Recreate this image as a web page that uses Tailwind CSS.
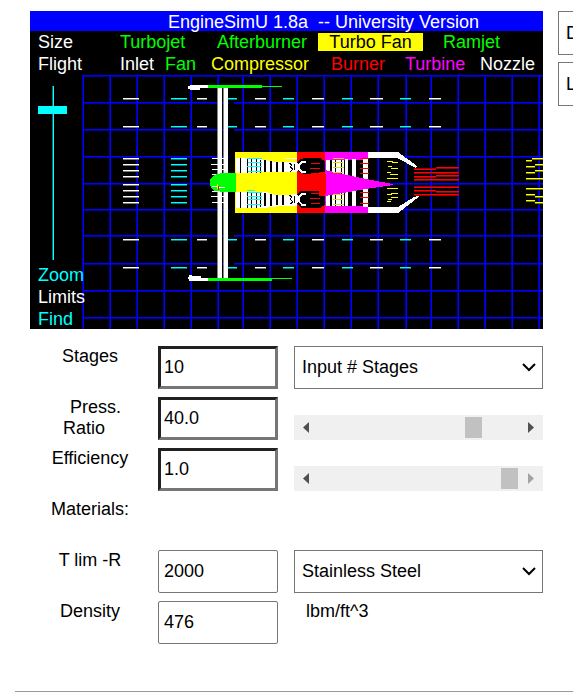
<!DOCTYPE html>
<html lang="en">
<head>
<meta charset="utf-8">
<meta name="viewport" content="width=device-width, initial-scale=1">
<title>EngineSimU 1.8a</title>
<script src="https://cdn.jsdelivr.net/npm/@tailwindcss/browser@4"></script>
</head>
<body class="bg-white text-black text-[18px] leading-[21px] font-['Liberation_Sans',Arial,sans-serif] overflow-hidden">
<div class="flex gap-[15px] pl-[30px] pt-[11px]">
  <main class="flex-1 min-w-0">
    <section class="relative overflow-hidden bg-black" aria-label="Engine schematic">
      <svg class="block w-full" viewBox="30 11 513 318" shape-rendering="crispEdges" aria-hidden="true">
        <defs>
          <g id="rowdash">
            <path stroke="#fff" d="M123 0h16M197 0h10M255 0h11M312 0h12M370 0h13M429 0h12"/>
            <path stroke="#0ff" d="M171 0h16M225 0h12M283 0h11M342 0h11M400 0h11"/>
            <path stroke="#777" d="M123 1h16M197 1h10M255 1h11M312 1h12M370 1h13M429 1h12"/>
            <path stroke="#077" d="M171 1h16M225 1h12M283 1h11M342 1h11M400 1h11"/>
          </g>
          <path id="stack" d="M0 158.500h16M0 164.500h16M0 170.500h16M0 176.500h16M0 184.500h16M0 190.500h16M0 196.500h16M0 202.500h16"/>
        </defs>
        <!-- grid -->
        <g stroke="#0000a8">
          <path d="M82.500 75V329M109.500 75V329M136.500 75V329M163.500 75V329M190.500 75V329M217.500 75V329M242.500 75V329M269.500 75V329M296.500 75V329M323.500 75V329M350.500 75V329M377.500 75V329M405.500 75V329M430.500 75V329M457.500 75V329M484.500 75V329M511.500 75V329M538.500 75V329"/>
          <path d="M83 76.500H543M83 103.500H543M83 130.500H543M83 157.500H543M83 184.500H543M83 210.500H543M83 236.500H543M83 264.500H543M83 291.500H543M83 318.500H543"/>
        </g>
        <g stroke="#00f">
          <path d="M83.500 75V329M110.500 75V329M137.500 75V329M164.500 75V329M191.500 75V329M218.500 75V329M243.500 75V329M270.500 75V329M297.500 75V329M324.500 75V329M351.500 75V329M378.500 75V329M406.500 75V329M431.500 75V329M458.500 75V329M485.500 75V329M512.500 75V329M539.500 75V329"/>
          <path d="M83 75.500H543M83 102.500H543M83 129.500H543M83 156.500H543M83 183.500H543M83 209.500H543M83 235.500H543M83 263.500H543M83 290.500H543M83 317.500H543"/>
        </g>
        <path fill="#000" d="M229 102h5v3h-5zM229 129h5v3h-5zM229 156h6v3h-6zM229 209h6v3h-6zM229 235h5v3h-5zM229 263h5v3h-5z"/>
        <!-- flow particles -->
        <use href="#rowdash" y="98.500"/><use href="#rowdash" y="126.500"/>
        <use href="#rowdash" y="239.500"/><use href="#rowdash" y="267.500"/>
        <use href="#stack" x="123" y="1" stroke="#777"/><use href="#stack" x="123" stroke="#fff"/>
        <use href="#stack" x="171" y="1" stroke="#077"/><use href="#stack" x="171" stroke="#0ff"/>
        <!-- fan blades -->
        <path fill="#888" d="M217 88h1v190h-1zM223 88h1v190h-1z"/>
        <path fill="#fff" d="M218 88h4v190h-4zM224 88h4v190h-4z"/>
        <path stroke="#fff" d="M212 158.500h12M211 164.500h13M212 169.500h12M212 174.500h12M212 191.500h12M211 196.500h13M212 202.500h12"/>
        <!-- cowl -->
        <path fill="#fff" d="M188 86h2v-1h18v3h-8v2h-10v-1h-2zM188 277h1v-2h3v1h9v2h8v3h-20v-2h-1z"/>
        <path fill="#0f0" d="M208 85h54v1h20v1h-20v1h-54zM208 278h84v1h-20v2h-64z"/>
        <!-- compressor -->
        <path fill="#ff0" d="M235 152h62v61h-62z"/>
        <path fill="#fff" d="M236 158h17l12 2 12 2h20v10h-14l-47 1zM236 192h30l10 3h21v11h-17l-16 2h-28z"/>
        <g stroke="#000">
          <path d="M240.500 158V173M247.500 158V173M251.500 159V173M256.500 159V173M260.500 160V173"/>
          <path d="M265 160V172M271 161V172M277 162V172M283 162V172" stroke-width="2"/>
          <path d="M240.500 192V208M247.500 192V208M251.500 192V208M256.500 192V208M260.500 193V207"/>
          <path d="M265 193V206M271 194V206M277 195V205M283 195V205" stroke-width="2"/>
          <path fill="none" d="M289 163l3 2-2 2 3 2-3 3M289 195l3 2-2 2 3 3-3 2"/>
        </g>
        <path stroke="#0ff" d="M247 158.500h15M248 162.500h14M247 166.500h15M248 171.500h14M247 190.500h8M248 192.500h14M247 196.500h15M248 199.500h14M247 204.500h15"/>
        <path stroke="#fff" d="M285 158.500h12"/>
        <path fill="#0f0" d="M210 179l3-3 4-2 6-1h13v19h-12l-9-1-4-3-1-4z"/>
        <path stroke="#fff" d="M212 186.500h7M219 187.500h6"/>
        <path fill="#ff0" d="M217 184h1v5h-1z"/><path fill="#f00" d="M218 186h1v4h-1z"/>
        <!-- burner -->
        <path fill="#f00" d="M297 152h29v61h-29z"/>
        <path fill="#000" d="M297 162l4-3 4-1h15l5 3 1 2v8l-5 3h-17l-5-2-2-2zM297 194l4-3h19l5 4 1 3v6l-6 4h-18l-5-4z"/>
        <path fill="#fff" d="M293 162h3l3 3v4l-3 3h-3zM293 194h3l3 3v4l-3 4h-3z"/>
        <path fill="none" stroke="#000" d="M294.500 164v6M294.500 196v7"/>
        <path fill="none" stroke="#fff" stroke-width="1.500" d="M306 162h-4l-3 3v4l3 3h4M306 194h-4l-3 3v4l3 4h4"/>
        <path stroke="#f00" d="M311 163.500h9M310 168.500h10M311 173.500h9M311 193.500h9M310 198.500h10M311 203.500h9"/>
        <!-- turbine and nozzle -->
        <path fill="#f0f" d="M325 152h43v61h-43z"/>
        <path fill="#000" d="M326 160h42v46h-42z"/>
        <path fill="#fff" d="M326 160h4v46h-4zM332 160h3v46h-3zM336 160h5v46h-5zM342 160h2v46h-2zM345 159h3v47h-3zM352 159h4v47h-4zM363 159h5v48h-5z"/>
        <path fill="#f0f" d="M325 170l18 4 23 5 27 5v1l-27 4-23 4-18 3z"/>
        <path fill="#f00" d="M319 172h6v24h-6zM324 174h2v20h-2z"/>
        <path stroke="#dd0" d="M333 158.500h11M333 162.500h10M333 167.500h11M333 172.500h10M333 194.500h11M333 199.500h10M333 204.500h11"/>
        <path stroke="#f00" d="M360 158.500h9M360 163.500h9M360 168.500h9M360 173.500h9M360 192.500h9M360 197.500h9M360 203.500h9"/>
        <path fill="#fff" d="M368 152h30l19 14-1 2-19-10h-29zM368 207h30l16-10 6-2v1l-22 17h-30z"/>
        <g fill="none" stroke="#ff0">
          <path d="M387 161.500h6M392 162.500h6M388 166.500h4M391 168.500h7M387 172.500h4M390 174.500h8M387 178.500h11M387 188.500h11M391 193.500h7M387 194.500h5M391 197.500h7M388 199.500h4M387 201.500h4"/>
          <path d="M526 160.500h6M532 158.500h11M526 166.500h9M535 164.500h8M526 172.500h9M535 170.500h8M526 178.500h17M526 188.500h17M526 194.500h9M535 196.500h8M526 200.500h9M535 202.500h8"/>
        </g>
        <path stroke="#770" d="M526 161.500h6M532 159.500h11M526 167.500h9M535 165.500h8M526 173.500h9M535 171.500h8M526 179.500h17M526 189.500h17M526 195.500h9M535 197.500h8M526 201.500h9M535 203.500h8"/>
        <path stroke="#900" d="M414 168.500h22M436 168.500h23M414 173.500h45M414 177.500h22M436 176.500h23M414 180.500h45M414 186.500h45M414 191.500h22M436 192.500h23M414 195.500h45"/>
        <path stroke="#f00" d="M414 169.500h22M436 167.500h23M414 172.500h45M414 176.500h22M436 175.500h23M414 179.500h45M414 187.500h45M414 190.500h22M436 191.500h23M414 194.500h45"/>
        <path stroke="#0ff" d="M53.500 86V260"/>
        <path stroke="#077" d="M52.500 86V260"/>
      </svg>

      <div class="absolute inset-x-0 top-0 leading-[22px]">
        <h1 class="h-5 bg-[#00f] pl-[74px] text-center text-white whitespace-pre">EngineSimU 1.8a  -- University Version</h1>
        <div class="bg-black">
          <nav class="grid grid-cols-[82px_97px_101px_105px_1fr] items-center h-[22px] pl-2 text-left text-[#0f0]">
            <button class="text-left text-white">Size</button>
            <button class="text-left">Turbojet</button>
            <button class="text-left">Afterburner</button>
            <button class="h-[18px] bg-[#ff0] text-black leading-[18px]">Turbo Fan</button>
            <button class="pl-5 text-left">Ramjet</button>
          </nav>
          <nav class="grid grid-cols-[82px_45px_46px_120px_74px_75px_1fr] h-[22px] pl-2">
            <button class="text-left text-white">Flight</button>
            <button class="text-left text-white">Inlet</button>
            <button class="text-left text-[#0f0]">Fan</button>
            <button class="text-left text-[#ff0]">Compressor</button>
            <button class="text-left text-[#f00]">Burner</button>
            <button class="text-left text-[#f0f]">Turbine</button>
            <button class="text-left text-white">Nozzle</button>
          </nav>
        </div>
        <div class="flex flex-col items-start pl-2">
          <div class="h-[189px] pt-[11px]">
            <input type="range" aria-label="Zoom" min="0" max="100" value="12" class="block appearance-none bg-transparent [writing-mode:vertical-lr] w-[29px] h-[174px] [&::-webkit-slider-thumb]:appearance-none [&::-webkit-slider-thumb]:w-[29px] [&::-webkit-slider-thumb]:h-2 [&::-webkit-slider-thumb]:bg-[#0ff]">
          </div>
          <button class="text-[#0ff]">Zoom</button>
          <button class="text-white">Limits</button>
          <button class="text-[#0ff]">Find</button>
        </div>
      </div>
    </section>

    <form class="grid grid-cols-[120px_120px_1fr] gap-x-2 auto-rows-[43px] gap-y-2 pt-[17px]">
      <label for="stages" class="text-center">Stages</label>
      <input id="stages" value="10" class="w-full h-full border-3 border-t-[#212121] border-l-[#212121] border-r-[#767676] border-b-[#767676] px-[3px]">
      <div class="relative ml-2">
        <select aria-label="Stages input mode" class="appearance-none w-full h-full border border-[#767676] bg-white px-[7px]"><option>Input # Stages</option></select>
        <svg class="absolute right-[7px] top-[17px] w-[14px] h-[9px] pointer-events-none" viewBox="0 0 14 9" fill="none" stroke="#000" stroke-width="2"><path d="M1 1l6 6 6-6"/></svg>
      </div>

      <label for="ratio" class="text-center"><span class="block pl-[11px]">Press.</span><span class="block pr-3">Ratio</span></label>
      <input id="ratio" value="40.0" class="w-full h-full border-3 border-t-[#212121] border-l-[#212121] border-r-[#767676] border-b-[#767676] px-[3px]">
      <div class="ml-2 self-end flex h-[25px] bg-[#f0f0f0]">
        <button type="button" aria-label="Decrease ratio" class="w-[25px] flex items-center pl-[9px]"><svg class="w-[6px] h-[11px]" viewBox="0 0 6 11" fill="#505050"><path d="M6 0v11L0 5.500z"/></svg></button>
        <input type="range" aria-label="Pressure ratio" min="0" max="100" value="80" class="appearance-none flex-1 min-w-0 h-[25px] bg-transparent [&::-webkit-slider-thumb]:appearance-none [&::-webkit-slider-thumb]:w-[17px] [&::-webkit-slider-thumb]:h-[21px] [&::-webkit-slider-thumb]:bg-[#c1c1c1]">
        <button type="button" aria-label="Increase ratio" class="w-[25px] flex items-center justify-end pr-[9px]"><svg class="w-[6px] h-[11px]" viewBox="0 0 6 11" fill="#505050"><path d="M0 0v11l6-5.500z"/></svg></button>
      </div>

      <label for="eff" class="text-center">Efficiency</label>
      <input id="eff" value="1.0" class="w-full h-full border-3 border-t-[#212121] border-l-[#212121] border-r-[#767676] border-b-[#767676] px-[3px]">
      <div class="ml-2 self-end flex h-[25px] bg-[#f0f0f0]">
        <button type="button" aria-label="Decrease efficiency" class="w-[25px] flex items-center pl-[9px]"><svg class="w-[6px] h-[11px]" viewBox="0 0 6 11" fill="#505050"><path d="M6 0v11L0 5.500z"/></svg></button>
        <input type="range" aria-label="Efficiency value" min="0" max="100" value="100" class="appearance-none flex-1 min-w-0 h-[25px] bg-transparent [&::-webkit-slider-thumb]:appearance-none [&::-webkit-slider-thumb]:w-[17px] [&::-webkit-slider-thumb]:h-[21px] [&::-webkit-slider-thumb]:bg-[#c1c1c1]">
        <button type="button" disabled aria-label="Increase efficiency" class="w-[25px] flex items-center justify-end pr-[9px]"><svg class="w-[6px] h-[11px]" viewBox="0 0 6 11" fill="#a3a3a3"><path d="M0 0v11l6-5.500z"/></svg></button>
      </div>

      <p class="text-center">Materials:</p><span></span><span></span>

      <label for="tlim" class="text-center">T lim -R</label>
      <input id="tlim" value="2000" class="w-full h-full border border-[#767676] rounded-[2px] px-[5px]">
      <div class="relative ml-2">
        <select aria-label="Material" class="appearance-none w-full h-full border border-[#767676] bg-white px-[7px]"><option>Stainless Steel</option></select>
        <svg class="absolute right-[7px] top-[17px] w-[14px] h-[9px] pointer-events-none" viewBox="0 0 14 9" fill="none" stroke="#000" stroke-width="2"><path d="M1 1l6 6 6-6"/></svg>
      </div>

      <label for="density" class="text-center">Density</label>
      <input id="density" value="476" class="w-full h-full border border-[#767676] rounded-[2px] px-[5px]">
      <p class="pl-5">lbm/ft^3</p>
    </form>
  </main>
  <aside class="w-[15px] shrink-0 flex flex-col gap-[7px] overflow-hidden">
    <select aria-label="Mode" class="appearance-none w-full h-11 border border-r-0 border-[#767676] bg-white pl-[7px]"><option>D</option></select>
    <select aria-label="Units" class="appearance-none w-full h-11 border border-r-0 border-[#767676] bg-white pl-[7px]"><option>L</option></select>
  </aside>
</div>
<hr class="ml-[15px] mt-[47px] border-t border-[#999]">
</body>
</html>
